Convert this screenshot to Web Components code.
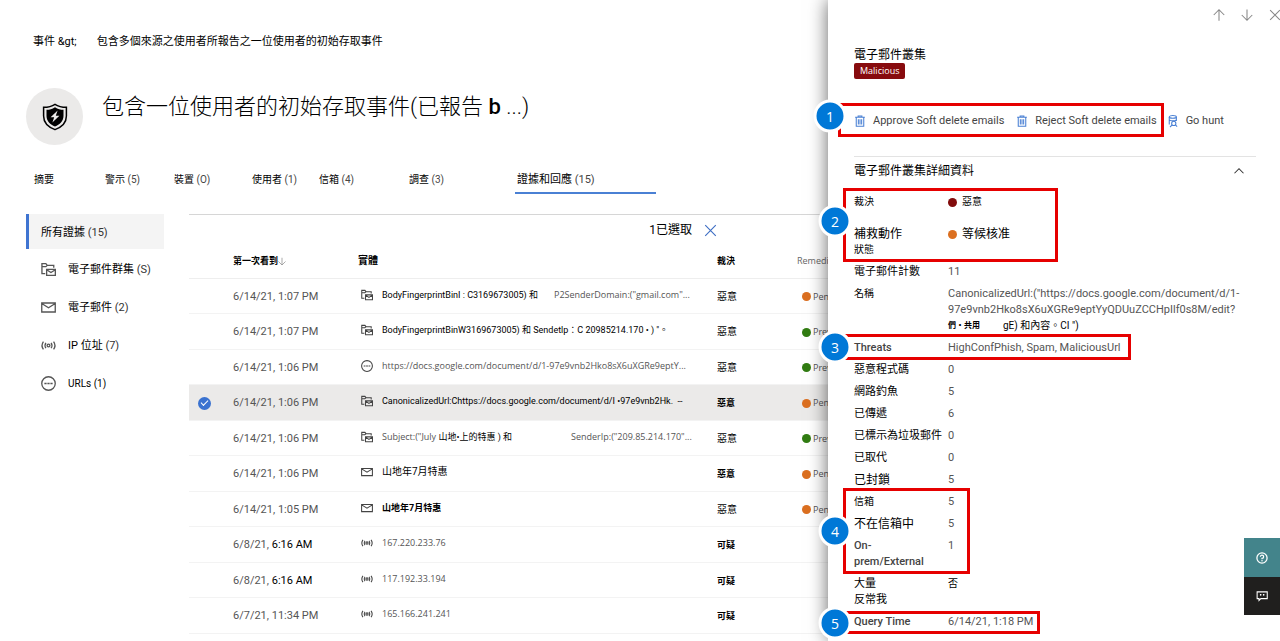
<!DOCTYPE html>
<html lang="zh-Hant">
<head>
<meta charset="utf-8">
<meta name="viewport" content="width=device-width, initial-scale=1">
<title>事件</title>
<style>
  html, body { margin: 0; }
  body {
    font: 11px/16px Roboto, "Noto Sans CJK TC", sans-serif;
    color: #000;
    background: #fff;
  }
</style>
</head>
<body>
<incident-page></incident-page>

<script>
const ICONS = {
  cluster: ['0 0 16 16', '<path d="M4.500 12.300H1V1.800H5.200L6.700 3.600H13.600V6M1 5H5.200L6.700 3.600"/><path d="M6 7.800H15.300V14.200H6ZM6 8.200L10.600 11.200L15.300 8.200"/>'],
  mail: ['0 0 16 16', '<path d="M.8 3.200H15.200V12.800H.8ZM.8 3.800L8 8.200L15.200 3.800"/>'],
  ip: ['0 0 16 16', '<circle cx="8" cy="8" r="1.5"/><path d="M5.2 5.2Q3.4 8 5.2 10.8M10.8 5.2Q12.6 8 10.8 10.8M2.6 3.8Q-.4 8 2.6 12.2M13.4 3.8Q16.4 8 13.4 12.2"/>'],
  url: ['0 0 16 16', '<circle cx="8" cy="8" r="7.200"/><path d="M3.6 8H6M6.8 8H9.2M10 8H12.4" stroke-width="1.6"/>'],
  close: ['0 0 16 16', '<path d="M1.5 1.5L14.5 14.5M14.5 1.5L1.5 14.5"/>'],
  up: ['0 0 16 16', '<path d="M8 15.500V1M1 8L8 1L15 8"/>'],
  down: ['0 0 16 16', '<path d="M8 .5V15M1 8L8 15L15 8"/>'],
  chevron: ['0 0 16 16', '<path d="M2 11L8 5L14 11"/>'],
  trash: ['0 0 16 16', '<path d="M1.5 3H14.5M5.5 3V1.2H10.5V3M3 3V15H13V3M5.8 5.5V12.8M8 5.5V12.8M10.2 5.5V12.8"/>'],
  hunt: ['0 0 16 16', '<path d="M3 2.500V12.500M12.500 2.500V8M3 6.500C5 8.300 10.500 8.300 12.500 6.500"/><ellipse cx="7.750" cy="2.500" rx="4.750" ry="1.800"/><circle cx="9" cy="11.200" r="2.800"/><path d="M7 13.200L4 16M11.200 13.200L13.500 15.500"/>'],
  shield: ['0 0 26 28', '<path d="M13 1.300C9.500 3.600 6 4.300 1.600 4.300V13C1.600 19.500 6.800 24.300 13 26.600C19.200 24.300 24.400 19.500 24.400 13V4.300C20 4.300 16.500 3.600 13 1.300Z" stroke-width="1.500"/><path d="M13 4.200C10.200 6 7.500 6.700 4.500 6.800V13C4.500 18 8.300 21.600 13 23.500C17.700 21.600 21.500 18 21.500 13V6.800C18.500 6.700 15.800 6 13 4.200Z" fill="currentColor" stroke="none"/><path d="M15.600 7.500L8.600 14.200H12.200L10.400 19.500L17.400 12.700H13.800Z" fill="#ebeae9" stroke="none"/>'],
  help: ['0 0 16 16', '<circle cx="8" cy="8" r="6.800" stroke-width="1.700"/><path d="M5.800 6.300A2.200 2.200 0 1 1 8 8.500V9.800" stroke-width="1.600"/><circle cx="8" cy="11.800" r="1" fill="currentColor" stroke="none"/>'],
  chat: ['0 0 16 16', '<path d="M1.500 2.500H15V11.500H6.500L4 14V11.500H1.500Z" stroke-width="1.400"/><path d="M5.500 6L7 7.300M7 6L5.500 7.300M9.500 6L11 7.300M11 6L9.500 7.300"/>']
};

const define = (name, html, setup) => {
  const template = document.createElement('template');
  template.innerHTML = html;
  customElements.define(name, class extends HTMLElement {
    constructor() {
      super();
      this.attachShadow({ mode: 'open' }).append(template.content.cloneNode(true));
    }
    connectedCallback() {
      if (setup && !this.ready) { this.ready = true; setup(this, this.shadowRoot); }
    }
  });
};

define('ui-icon', `
  <style>
    :host { display: inline-block; flex: none; width: 12px; height: 12px; }
    svg { display: block; width: 100%; height: 100%; fill: none; stroke: currentColor; stroke-width: 1.4; overflow: visible; }
  </style><svg aria-hidden="true"></svg>`,
  (host, root) => {
    const [box, body] = ICONS[host.getAttribute('name')];
    const svg = root.querySelector('svg');
    svg.setAttribute('viewBox', box);
    svg.innerHTML = body;
  });

define('status-dot', `
  <style>
    :host { display: inline-block; flex: none; width: 9px; height: 9px; border-radius: 50%; background: #db6f20; }
    :host([kind="done"]) { background: #317c12; }
    :host([kind="bad"]) { background: #820c0c; }
  </style>`);

/* Red frame with a numbered badge on its left edge. */
define('call-out', `
  <style>
    :host { display: block; position: relative; --t: -6px; --r: 0px; --b: -4px; --l: -11px; --lift: 0px; }
    .frame { position: absolute; inset: var(--t) var(--r) var(--b) var(--l); border: 3px solid #e60000; pointer-events: none; }
    .badge {
      position: absolute; left: -11px; top: calc(50% - var(--lift)); translate: -50% -50%;
      width: 27px; height: 27px; border: 3px solid #fff; border-radius: 50%;
      background: #0078d7; color: #fff; font: 14px/27px "Open Sans", sans-serif; text-align: center;
    }
  </style>
  <slot></slot>
  <div class="frame"><span class="badge"></span></div>`,
  (host, root) => { root.querySelector('.badge').textContent = host.getAttribute('number'); });

define('detail-row', `
  <style>
    :host { display: grid; grid-template-columns: 94px minmax(0, 1fr); align-items: start; }
    .label { white-space: nowrap; color: #000; }
    .value { color: #555; }
  </style>
  <div class="label"><slot name="label"></slot></div>
  <div class="value"><slot></slot></div>`);

define('bread-crumb', `
  <style>
    :host { display: flex; gap: 20px; padding-left: 7px; line-height: 16px; }
    a { color: inherit; text-decoration: none; }
  </style>
  <a href="#incidents">事件 &amp;gt;</a>
  <span>包含多個來源之使用者所報告之一位使用者的初始存取事件</span>`);

define('incident-header', `
  <style>
    :host { display: flex; gap: 19px; }
    .avatar { display: grid; place-items: center; width: 57px; height: 57px; border-radius: 50%; background: #ebeae9; color: #000; }
    ui-icon { width: 26px; height: 28px; }
    h1 { margin: 7px 0 0; font-size: 22px; line-height: 24px; font-weight: 300; color: #000; white-space: nowrap; }
    b { font-weight: 500; }
  </style>
  <div class="avatar"><ui-icon name="shield"></ui-icon></div>
  <h1>包含一位使用者的初始存取事件(已報告 <b>b</b> ...)</h1>`);

define('incident-tabs', `
  <style>
    :host { display: grid; grid-template-columns: 71px 69px 78px 67px 90px 106px 141px; padding-left: 8px; }
    button {
      font: inherit; font-size: 10px; line-height: 16px; text-align: left; color: #000; white-space: nowrap;
      background: none; border: 0; border-bottom: 2px solid transparent; padding: 0 0 4px;
    }
    button[aria-selected="true"] { border-color: #4a80d4; padding-left: 2px; font-size: 11px; }
    .n { color: #444; }
  </style>
  <button role="tab">摘要</button>
  <button role="tab">警示 <span class="n">(5)</span></button>
  <button role="tab">裝置 <span class="n">(O)</span></button>
  <button role="tab">使用者 <span class="n">(1)</span></button>
  <button role="tab">信箱 <span class="n">(4)</span></button>
  <button role="tab">調查 <span class="n">(3)</span></button>
  <button role="tab" aria-selected="true">證據和回應 <span class="n">(15)</span></button>`);

define('evidence-filter', `
  <style>
    :host { display: flex; flex-direction: column; gap: 3px; }
    a { display: flex; align-items: center; gap: 12px; height: 35px; padding-left: 15px; color: #000; text-decoration: none; white-space: nowrap; font-size: 11px; box-sizing: border-box; }
    a.on { background: #f4f4f4; border-left: 3px solid #3f74d1; padding: 3px 0 0 12px; }
    ui-icon { width: 15px; height: 15px; color: #555; }
    .n { color: #333; }
    .small { font-size: 10px; }
  </style>
  <a class="on" href="#all"><span>所有證據 <span class="n">(15)</span></span></a>
  <a href="#clusters"><ui-icon name="cluster"></ui-icon><span>電子郵件群集 <span class="n">(S)</span></span></a>
  <a href="#mails"><ui-icon name="mail"></ui-icon><span>電子郵件 <span class="n">(2)</span></span></a>
  <a href="#ips"><ui-icon name="ip"></ui-icon><span>IP 位址 <span class="n">(7)</span></span></a>
  <a href="#urls"><ui-icon name="url"></ui-icon><span class="small">URLs (1)</span></a>`);

const ROWS = [
  ['6/14/21, 1:07 PM', 'cluster', '<span class="k a">BodyFingerprintBinI : C3169673005) 和</span>P2SenderDomain:("gmail.com"...', '惡意', '', 'wait', 'Pending'],
  ['6/14/21, 1:07 PM', 'cluster', '<span class="k">BodyFingerprintBinW3169673005) 和 Sendetlp：C 20985214.170 • ) "。</span>', '惡意', '', 'done', 'Prevented'],
  ['6/14/21, 1:06 PM', 'url', 'https://docs.google.com/document/d/1-97e9vnb2Hko8sX6uXGRe9eptY...', '惡意', '', 'done', 'Prevented'],
  ['6/14/21, 1:06 PM', 'cluster', '<span class="k">CanonicalizedUrl:Chttps://docs.google.com/document/d/I •97e9vnb2Hk. &nbsp;--</span>', '惡意', 'b', 'wait', 'Pending', true],
  ['6/14/21, 1:06 PM', 'cluster', '<span class="s">Subject:("July <span class="k">山地•上的特惠 ) 和</span></span>SenderIp:("209.85.214.170"...', '惡意', '', 'done', 'Prevented'],
  ['6/14/21, 1:06 PM', 'mail', '<span class="k mid">山地年7月特惠</span>', '惡意', 'b', 'wait', 'Pending'],
  ['6/14/21, 1:05 PM', 'mail', '<span class="k"><b>山地年7月特惠</b></span>', '惡意', '', 'wait', 'Pending'],
  ['6/8/21, <span class="k">6:16 AM</span>', 'ip', '167.220.233.76', '可疑', 'b'],
  ['6/8/21, <span class="k">6:16 AM</span>', 'ip', '117.192.33.194', '可疑', 'b'],
  ['6/7/21, 11:34 PM', 'ip', '165.166.241.241', '可疑', 'b']
];

define('evidence-table', `
  <style>
    :host { display: block; min-width: 0; border-top: 1px solid #d6d6d6; }
    .bar { display: flex; justify-content: flex-end; align-items: center; gap: 12px; height: 30px; padding-right: 111px; font-size: 12px; color: #000; }
    button { font: inherit; color: inherit; background: none; border: 0; padding: 0; }
    .bar button { display: flex; }
    .bar ui-icon { width: 13px; height: 13px; color: #3f6fc4; }
    table { border-collapse: collapse; table-layout: fixed; width: calc(100% + 40px); }
    col.c1 { width: 44px; } col.c2 { width: 125px; } col.c4 { width: 80px; } col.c5 { width: 71px; }
    th { height: 33px; padding: 0; text-align: left; font-size: 9px; font-weight: 700; line-height: 14px; border-bottom: 1px solid #eee; box-sizing: border-box; white-space: nowrap; color: #000; }
    th ui-icon { width: 8px; height: 9px; color: #888; vertical-align: -2px; }
    th.ent { font-size: 10px; }
    th.rem { font-family: "Open Sans", sans-serif; font-weight: 400; color: #666; }
    td { height: 35px; padding: 2px 0 0; box-sizing: border-box; border-bottom: 1px solid #f3f3f3; color: #555; white-space: nowrap; line-height: 16px; overflow: hidden; }
    tr:nth-child(even) td { height: 36px; }
    tr.sel td { background: #ebeae9; }
    td.ent { font: 9px/16px "Open Sans", "Noto Sans CJK TC", sans-serif; padding: 0; }
    .in { display: flex; align-items: center; padding: 0 0 2px 3px; }
    .in ui-icon { margin-right: 9px; color: #444; }
    .k { color: #000; font-family: Roboto, "Noto Sans CJK TC", sans-serif; }
    .a { min-width: 172px; } .s { min-width: 189px; } .mid { font-size: 10px; }
    td.v { font-size: 10px; color: #000; }
    td.v.b { font-size: 9px; font-weight: 700; }
    td.r { font: 9px/16px "Open Sans", sans-serif; }
    td.r div { display: flex; align-items: center; gap: 2px; padding-left: 5px; }
    input { appearance: none; display: block; width: 13px; height: 13px; margin: 0 0 0 9px; border-radius: 50%; position: relative; }
    input:checked { background: #3a72d0; }
    input:checked::after { content: ""; position: absolute; left: 3px; top: 3px; width: 6px; height: 3px; border: solid #fff; border-width: 0 0 1px 1px; rotate: -45deg; }
  </style>
  <div class="bar"><span>1已選取</span><button aria-label="清除選取"><ui-icon name="close"></ui-icon></button></div>
  <table>
    <colgroup><col class="c1"><col class="c2"><col><col class="c4"><col class="c5"></colgroup>
    <thead><tr><th></th><th><button>第一次看到<ui-icon name="down"></ui-icon></button></th><th class="ent">實體</th><th>裁決</th><th class="rem">Remediation</th></tr></thead>
    <tbody></tbody>
  </table>`,
  (host, root) => {
    root.querySelector('tbody').innerHTML = ROWS.map(([date, icon, text, verdict, cls, dot, status, sel]) => `
      <tr class="${sel ? 'sel' : ''}">
        <td><input type="checkbox" aria-label="選取" ${sel ? 'checked' : ''}></td>
        <td>${date}</td>
        <td class="ent"><div class="in"><ui-icon name="${icon}"></ui-icon>${text}</div></td>
        <td class="v ${cls}">${verdict}</td>
        <td class="r">${dot ? `<div><status-dot kind="${dot}"></status-dot>${status}</div>` : ''}</td>
      </tr>`).join('');
  });

define('cluster-panel', `
  <style>
    :host { display: block; position: relative; background: #fff; box-shadow: 0 0 18px rgba(0, 0, 0, .6); padding: 8px 24px 0 26px; }
    button { font: inherit; color: inherit; background: none; border: 0; padding: 0; display: flex; align-items: center; gap: 7px; white-space: nowrap; }
    .tools { display: flex; justify-content: flex-end; gap: 16px; margin-right: -25px; height: 14px; color: #888; }
    h2, h3 { margin: 0; font-weight: 400; font-size: 12px; line-height: 16px; color: #000; }
    h2 { margin-top: 25px; }
    .tag { display: block; width: fit-content; padding: 0 6px; border-radius: 2px; background: #870b0e; color: #fff; font: 9px/16px "Open Sans", sans-serif; }
    .actions { display: flex; gap: 10px; margin-top: 34px; color: #444; }
    .actions div { display: flex; gap: 12px; }
    .actions ui-icon { color: #4a80d4; }
    .head { display: flex; justify-content: space-between; align-items: center; margin-top: 27px; padding: 6px 11px 7px 0; border-top: 1px solid #e3e3e3; }
    .head ui-icon { color: #333; }
    .list { display: flex; flex-direction: column; gap: 6px; margin-top: 8px; }
    call-out { width: fit-content; }
    call-out detail-row + detail-row { margin-top: 6px; }
    call-out detail-row + detail-row.wide { margin-top: 16px; }
    .state { display: flex; align-items: center; gap: 5px; color: #000; font-size: 10px; }
    .xs, .m, .en { display: block; }
    .state.m { display: flex; }
    .m { font-size: 12px; } .xs { font-size: 10px; } .k { color: #000; } .en { font-weight: 500; color: #444; }
    .last { display: flex; }
    .bit { width: 55px; font-size: 8px; font-weight: 700; }
  </style>
  <div class="tools">
    <button aria-label="上一個"><ui-icon name="up"></ui-icon></button>
    <button aria-label="下一個"><ui-icon name="down"></ui-icon></button>
    <button aria-label="關閉"><ui-icon name="close"></ui-icon></button>
  </div>
  <h2>電子郵件叢集</h2>
  <span class="tag">Malicious</span>
  <div class="actions">
    <call-out number="1" style="--t:-10px;--b:-8px;--l:-16px;--r:-7px;--lift:4px">
      <div><button><ui-icon name="trash"></ui-icon>Approve Soft delete emails</button>
      <button><ui-icon name="trash"></ui-icon>Reject Soft delete emails</button></div>
    </call-out>
    <button><ui-icon name="hunt"></ui-icon>Go hunt</button>
  </div>
  <div class="head"><h3>電子郵件叢集詳細資料</h3><button aria-label="摺疊"><ui-icon name="chevron"></ui-icon></button></div>
  <div class="list">
    <call-out number="2" style="--r:-48px;--lift:4px">
      <detail-row><span slot="label" class="xs">裁決</span><span class="state"><status-dot kind="bad"></status-dot>惡意</span></detail-row>
      <detail-row class="wide"><span slot="label"><span class="m">補救動作</span><span class="xs">狀態</span></span><span class="state m"><status-dot></status-dot>等候核准</span></detail-row>
    </call-out>
    <detail-row><span slot="label">電子郵件計數</span>11</detail-row>
    <detail-row><span slot="label" class="xs">名稱</span>CanonicalizedUrl:("https://docs.google.com/document/d/1-<br>97e9vnb2Hko8sX6uXGRe9eptYyQDUuZCCHpIlf0s8M/edit?<span class="k xs last"><span class="bit">們・共用</span><span>gE) 和內容。CI ")</span></span></detail-row>
    <call-out number="3" style="--r:-10px">
      <detail-row><span slot="label" class="en">Threats</span>HighConfPhish, Spam, MaliciousUrl</detail-row>
    </call-out>
    <detail-row><span slot="label">惡意程式碼</span>0</detail-row>
    <detail-row><span slot="label">網路釣魚</span>5</detail-row>
    <detail-row><span slot="label">已傳遞</span>6</detail-row>
    <detail-row><span slot="label">已標示為垃圾郵件</span>0</detail-row>
    <detail-row><span slot="label">已取代</span>0</detail-row>
    <detail-row><span slot="label" class="m">已封鎖</span>5</detail-row>
    <call-out number="4" style="--r:-16px">
      <detail-row><span slot="label" class="xs">信箱</span>5</detail-row>
      <detail-row><span slot="label" class="m">不在信箱中</span>5</detail-row>
      <detail-row><span slot="label" class="en">On-<br>prem/External</span>1</detail-row>
    </call-out>
    <detail-row><span slot="label">大量<br>反常我</span><span class="k xs">否</span></detail-row>
    <call-out number="5" style="--t:-3px;--r:-7px">
      <detail-row><span slot="label" class="en">Query Time</span>6/14/21, 1:18 PM</detail-row>
    </call-out>
  </div>`);

define('help-dock', `
  <style>
    :host { display: grid; grid-template-rows: 39px 38px; width: 36px; }
    button { display: grid; place-items: center; border: 0; padding: 0; color: #fff; background: #43848b; }
    button + button { background: #201f1e; }
  </style>
  <button aria-label="說明"><ui-icon name="help"></ui-icon></button>
  <button aria-label="意見反應"><ui-icon name="chat"></ui-icon></button>`);

define('incident-page', `
  <style>
    :host { display: grid; grid-template-columns: minmax(0, 1fr) 452px; min-height: 100vh; position: relative; }
    main { min-width: 0; overflow: hidden; padding: 34px 0 0 26px; box-sizing: border-box; }
    incident-header { margin-top: 38px; }
    incident-tabs { margin-top: 27px; }
    .body { display: grid; grid-template-columns: 138px minmax(0, 1fr); gap: 25px; align-items: start; margin-top: 20px; }
    help-dock { position: absolute; right: 0; top: 538px; }
  </style>
  <main>
    <bread-crumb></bread-crumb>
    <incident-header></incident-header>
    <incident-tabs role="tablist"></incident-tabs>
    <div class="body">
      <evidence-filter></evidence-filter>
      <evidence-table></evidence-table>
    </div>
  </main>
  <cluster-panel></cluster-panel>
  <help-dock></help-dock>`);
</script>
</body>
</html>
